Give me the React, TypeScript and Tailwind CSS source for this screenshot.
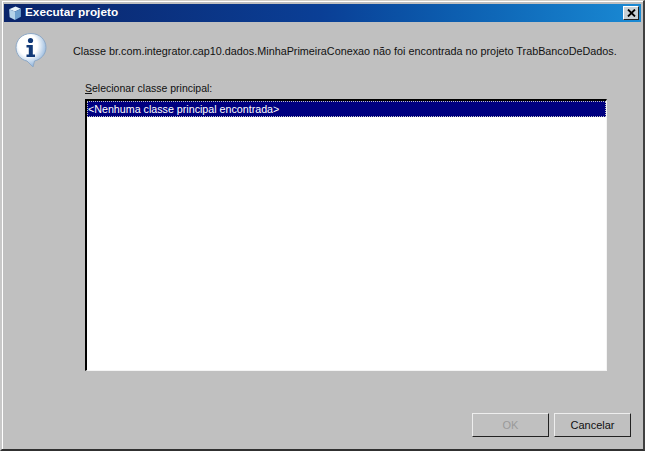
export default function App() {
  return (
    <div className="w-[645px] h-[451px] overflow-hidden bg-[#c0c0c0] font-['Liberation_Sans',Arial,sans-serif] text-[11px] text-[#111] border-t border-l-2 border-t-[#d4d0c8] border-l-[#c8c8c8] border-r-2 border-r-[#404040] border-b-2 border-b-[#303030]">
      <div className="h-full flex flex-col border-t border-l border-white pt-[2px] pl-[1px] pr-[2px]">
        {/* Title bar */}
        <div className="h-[18px] shrink-0 flex items-center pl-[3px] pr-[2px] bg-gradient-to-r from-[#0a246a] via-[#0a3f96] to-[#1a8ad4]">
          <svg width="16" height="16" viewBox="0 0 15 15" className="shrink-0">
            <path d="M2 4 L8 1.5 L13 3.5 L7.5 6 Z" fill="#e8f2fa" />
            <path d="M2 4 L7.5 6 L7.5 14 L2.5 11.5 Z" fill="#b4d2ea" />
            <path d="M7.5 6 L13 3.5 L13 11 L7.5 14 Z" fill="#6fa0cf" />
          </svg>
          <span className="ml-[2px] text-[11.8px] font-bold text-white leading-none">Executar projeto</span>
          <div className="ml-auto w-[16px] h-[14px] bg-[#c8d0d4] border border-t-white border-l-white border-r-[#222] border-b-[#222] flex items-center justify-center">
            <svg width="9" height="8" viewBox="0 0 9 8">
              <path d="M1 0.5 L8 7.5 M8 0.5 L1 7.5" stroke="#000" strokeWidth="1.8" />
            </svg>
          </div>
        </div>

        {/* Message */}
        <div className="flex items-start pl-[10px] pt-[10px] shrink-0">
          <svg width="34" height="36" viewBox="0 0 34 36" className="shrink-0">
            <defs>
              <radialGradient id="bubble" cx="0.4" cy="0.35" r="0.7">
                <stop offset="0.45" stopColor="#ffffff" />
                <stop offset="1" stopColor="#7fa9d6" />
              </radialGradient>
            </defs>
            <path d="M17 1.5 C8 1.5 2 8 2 15.5 C2 22.5 7 28 13 29 L19 35 L20.5 29 C27 27.5 32 22 32 15.5 C32 8 26 1.5 17 1.5 Z" fill="url(#bubble)" stroke="#8fa9c6" strokeWidth="1" />
            <circle cx="16.5" cy="8.5" r="2.6" fill="#123a78" />
            <path d="M12.5 13 H18.8 V22.5 H21 V25 H12.5 V22.5 H14.8 V15.5 H12.5 Z" fill="#123a78" />
          </svg>
          <p className="ml-[25px] mt-[12px] text-[10.8px] leading-[15px] whitespace-nowrap">
            Classe br.com.integrator.cap10.dados.MinhaPrimeiraConexao não foi encontrada no projeto TrabBancoDeDados.
          </p>
        </div>

        {/* Class list */}
        <div className="pl-[81px] pt-[13px] shrink-0">
          <label className="block text-[10.5px] leading-[15px]">
            <span className="underline">S</span>elecionar classe principal:
          </label>
          <div className="mt-[3px] w-[522px] h-[272px] bg-white border-t-2 border-l-2 border-t-black border-l-black border-r border-b border-r-[#f4f4f4] border-b-[#f4f4f4]">
            <div className="h-[16px] flex items-center bg-[#000080] text-[10.7px] text-white leading-none border border-dotted border-[#c0c0c0]">
              &lt;Nenhuma classe principal encontrada&gt;
            </div>
          </div>
        </div>

        {/* Buttons */}
        <div className="flex justify-end gap-[5px] pr-[10px] pt-[42px] shrink-0">
          <button className="w-[77px] h-[24px] bg-[#c0c0c0] text-[#9a9a9a] border border-t-[#eeeeee] border-l-[#eeeeee] border-r-[#222] border-b-[#222]">
            OK
          </button>
          <button className="w-[77px] h-[24px] bg-[#c0c0c0] border border-t-[#eeeeee] border-l-[#eeeeee] border-r-[#222] border-b-[#222]">
            Cancelar
          </button>
        </div>
      </div>
    </div>
  )
}
